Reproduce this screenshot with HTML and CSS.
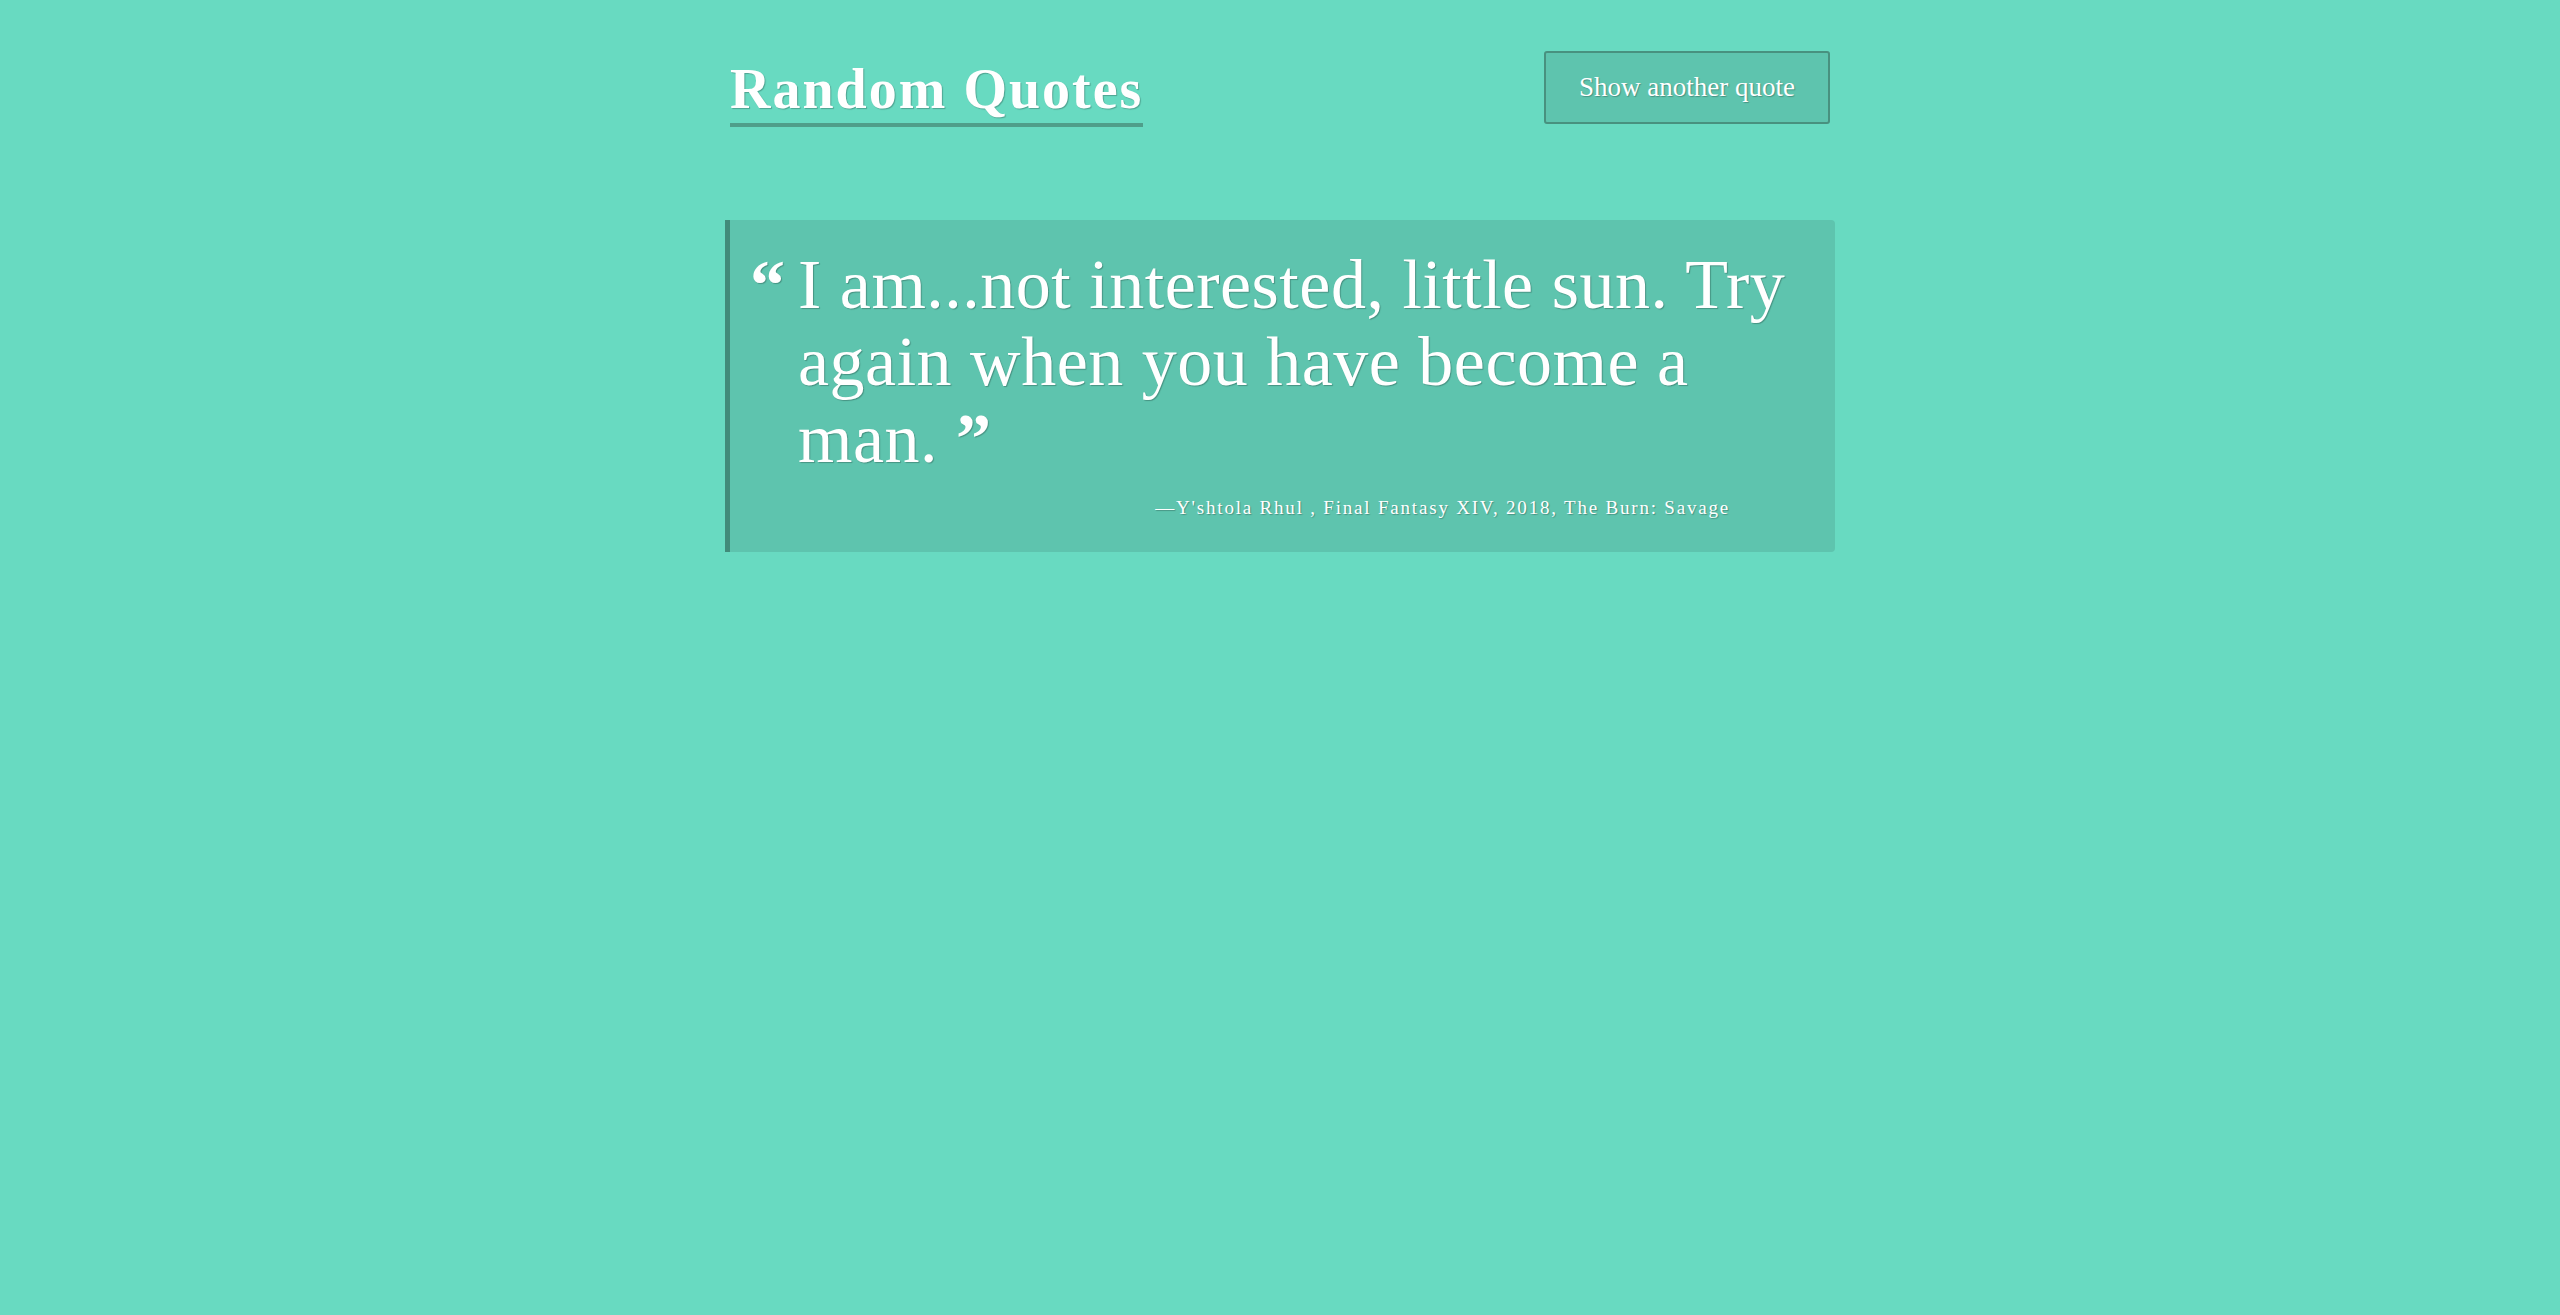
FILE: index.html
```html
<!DOCTYPE html>
<html lang="en">
<head>
<meta charset="utf-8">
<title>Random Quotes</title>
<link rel="stylesheet" href="styles.css">
</head>
<body>
<div class="container">
  <header class="header">
    <h1 class="title">Random Quotes</h1>
    <button class="btn" type="button">Show another quote</button>
  </header>
  <blockquote class="quote">
    <div class="quote-body">
      <span class="qmark qmark-open">“</span>
      <p class="quote-text">I am...not interested, little sun. Try again when you have become a man. <span class="qmark qmark-close">”</span></p>
    </div>
    <footer class="cite">—Y'shtola Rhul , Final Fantasy XIV, 2018, The Burn: Savage</footer>
  </blockquote>
</div>
</body>
</html>
```
FILE: styles.css
```css
html, body {
  margin: 0;
  padding: 0;
}

body {
  background: #68dac1;
  color: #ffffff;
  font-family: "Liberation Serif", "Times New Roman", serif;
  min-height: 1315px;
}

.container {
  width: 1110px;
  margin: 0 auto;
  padding-top: 51px;
}

.header {
  display: flex;
  justify-content: space-between;
  align-items: flex-start;
  padding: 0 5px;
  margin-bottom: 93px;
}

.title {
  display: inline-block;
  margin: 10px 0 0;
  font-size: 56px;
  line-height: 56px;
  font-weight: 700;
  letter-spacing: 2px;
  padding-bottom: 6px;
  border-bottom: 4px solid #4f9e8a;
  text-shadow: 1px 1px 1px rgba(0, 0, 0, 0.25);
}

.btn {
  font-family: "Liberation Serif", "Times New Roman", serif;
  font-size: 27px;
  line-height: 39px;
  color: #ffffff;
  background: #5ec4ae;
  border: 2px solid #48917f;
  border-radius: 3px;
  padding: 15px 33px;
  text-shadow: 1px 1px 1px rgba(0, 0, 0, 0.25);
  cursor: pointer;
}

.quote {
  margin: 0;
  background: #5ec4ae;
  border-left: 5px solid #418b7a;
  border-radius: 0 4px 4px 0;
  padding: 27px 20px 31px 20px;
}

.quote-body {
  display: flex;
  align-items: baseline;
}

.qmark {
  font-weight: 700;
  font-size: 70px;
  letter-spacing: 0;
}

.qmark-open {
  flex: 0 0 48px;
  line-height: 76.8px;
  text-shadow: 1px 1px 1px rgba(0, 0, 0, 0.25);
}

.qmark-close {
  line-height: 0;
}

.quote-text {
  margin: 0;
  flex: 1;
  font-size: 70px;
  line-height: 76.8px;
  letter-spacing: 0.5px;
  text-shadow: 1px 1px 1px rgba(0, 0, 0, 0.25);
}

.cite {
  margin-top: 17px;
  padding-right: 85px;
  text-align: right;
  font-size: 19px;
  line-height: 27px;
  letter-spacing: 1.8px;
  text-shadow: 1px 1px 1px rgba(0, 0, 0, 0.25);
}
```
